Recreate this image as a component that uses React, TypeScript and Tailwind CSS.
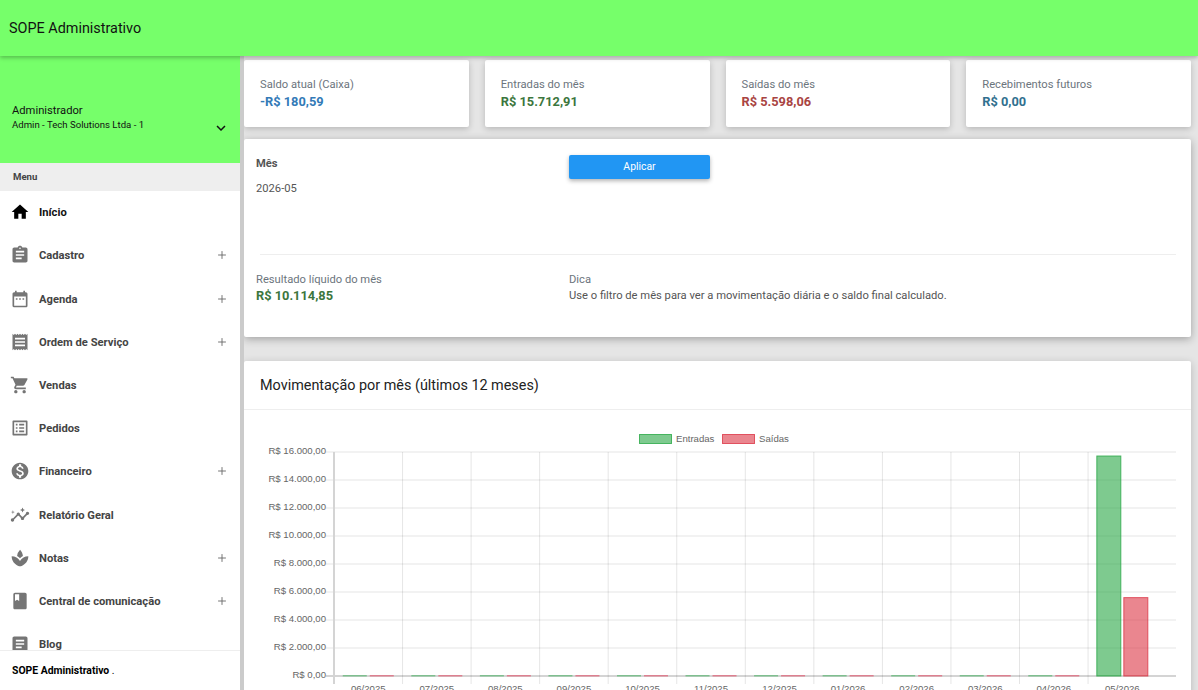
import { Plus } from 'lucide-react';
import {
  MdArticle, MdAssignment, MdBook, MdDateRange, MdExpandMore, MdHome, MdInsights,
  MdListAlt, MdMonetizationOn, MdReceipt, MdShoppingCart, MdSpa,
} from 'react-icons/md';
import type { IconType } from 'react-icons';

const menu: { label: string; icon: IconType; plus?: boolean; active?: boolean }[] = [
  { label: 'Início', icon: MdHome, active: true },
  { label: 'Cadastro', icon: MdAssignment, plus: true },
  { label: 'Agenda', icon: MdDateRange, plus: true },
  { label: 'Ordem de Serviço', icon: MdReceipt, plus: true },
  { label: 'Vendas', icon: MdShoppingCart },
  { label: 'Pedidos', icon: MdListAlt },
  { label: 'Financeiro', icon: MdMonetizationOn, plus: true },
  { label: 'Relatório Geral', icon: MdInsights },
  { label: 'Notas', icon: MdSpa, plus: true },
  { label: 'Central de comunicação', icon: MdBook, plus: true },
  { label: 'Blog', icon: MdArticle },
];

const stats = [
  { label: 'Saldo atual (Caixa)', value: '-R$ 180,59', color: 'text-[#337ab7]' },
  { label: 'Entradas do mês', value: 'R$ 15.712,91', color: 'text-[#3c763d]' },
  { label: 'Saídas do mês', value: 'R$ 5.598,06', color: 'text-[#a94442]' },
  { label: 'Recebimentos futuros', value: 'R$ 0,00', color: 'text-[#31708f]' },
];

const months = ['06/2025', '07/2025', '08/2025', '09/2025', '10/2025', '11/2025', '12/2025', '01/2026', '02/2026', '03/2026', '04/2026', '05/2026'];
const yLabels = ['R$ 16.000,00', 'R$ 14.000,00', 'R$ 12.000,00', 'R$ 10.000,00', 'R$ 8.000,00', 'R$ 6.000,00', 'R$ 4.000,00', 'R$ 2.000,00', 'R$ 0,00'];

const green = 'rgba(40,167,69,.6)';
const greenLine = 'rgba(40,167,69,.8)';
const red = 'rgba(220,53,69,.6)';
const redLine = 'rgba(220,53,69,.8)';

// chart drawn in its own coordinates: page x minus 244, page y minus 410
function Chart() {
  const left = 90;
  const right = 932;
  const top = 42;
  const zero = 266;
  const step = 68.55;
  const yOf = (v: number) => zero - (v / 16000) * (zero - top);
  const font = '"Liberation Sans", Arial, sans-serif';
  return (
    <svg width="947" height="280" className="block">
      <rect x="395.5" y="24.5" width="32" height="9" fill={green} stroke={greenLine} />
      <text x="432" y="32" fontSize="9.6" fill="#666" fontFamily={font}>Entradas</text>
      <rect x="478.5" y="24.5" width="32" height="9" fill={red} stroke={redLine} />
      <text x="515" y="32" fontSize="9.6" fill="#666" fontFamily={font}>Saídas</text>
      {yLabels.map((label, i) => {
        const y = top + (i * (zero - top)) / 8;
        return (
          <g key={label}>
            <line x1={left - 8} x2={right} y1={y} y2={y} stroke={i === 8 ? '#d4d4d4' : 'rgba(0,0,0,.1)'} strokeWidth={i === 8 ? 2 : 1} />
            <text x={82} y={y + 2} fontSize="9.6" fill="#666" textAnchor="end" fontFamily={font}>{label}</text>
          </g>
        );
      })}
      {months.map((m, i) => {
        const x = left + step * i;
        const center = x + step / 2;
        const barW = 24;
        const last = i === 11;
        const inY = yOf(15712.91);
        const outY = yOf(5598.06);
        return (
          <g key={m}>
            <line x1={x} x2={x} y1={top} y2={zero + 8} stroke={i === 0 ? '#d4d4d4' : 'rgba(0,0,0,.1)'} strokeWidth={i === 0 ? 2 : 1} />
            {last ? (
              <>
                <rect x={center - barW - 1.5} y={inY} width={barW} height={zero - inY} fill={green} stroke={greenLine} strokeWidth="1" />
                <rect x={center + 1.5} y={outY} width={barW} height={zero - outY} fill={red} stroke={redLine} strokeWidth="1" />
              </>
            ) : (
              <>
                <rect x={center - barW - 1.5} y={zero - 1} width={barW} height={1.5} fill="#7fbf8f" />
                <rect x={center + 1.5} y={zero - 1} width={barW} height={1.5} fill="#dd8090" />
              </>
            )}
            <text x={center} y={zero + 16} fontSize="9.6" fill="#666" textAnchor="middle" fontFamily={font}>{m}</text>
          </g>
        );
      })}
    </svg>
  );
}

function Sidebar() {
  return (
    <aside className="w-[240px] shrink-0 flex flex-col bg-white shadow-[2px_0_0_2px_#cbcbcb] relative z-10">
      <div className="h-[107px] shrink-0 bg-[#76ff6a] pl-3 pr-3 pt-[47px] relative">
        <div className="text-[11.2px] leading-[15px] text-[#111]">Administrador</div>
        <div className="text-[9.6px] leading-[13px] text-[#111]">Admin - Tech Solutions Ltda - 1</div>
        <MdExpandMore className="absolute right-[10px] top-[63px] text-[#111]" size={18} />
      </div>
      <div className="h-[28px] shrink-0 bg-[#eeeeee] pl-[13px] flex items-center text-[9.6px] font-bold text-[#444]">Menu</div>
      <nav className="flex-1 overflow-hidden pt-[1.1px]">
        {menu.map((item) => {
          const Icon = item.icon;
          return (
            <div key={item.label} className="h-[43.2px] flex items-center pl-[10px] pr-[12px]">
              <Icon size={20} className={`shrink-0 -mt-[3px] ${item.active ? 'text-black' : 'text-[#757575]'}`} />
              <span className={`ml-[9px] flex-1 text-[11.2px] font-bold ${item.active ? 'text-[#111]' : 'text-[#444]'}`}>{item.label}</span>
              {item.plus && <Plus size={12} strokeWidth={1.8} className="-mt-[3px] text-[#666]" />}
            </div>
          );
        })}
      </nav>
      <div className="h-[40px] shrink-0 border-t border-[#eeeeee] bg-white pl-3 flex items-center text-[10.4px] text-black">
        <span className="font-bold">SOPE Administrativo</span>&nbsp;.
      </div>
    </aside>
  );
}

export default function App() {
  return (
    <div className="h-[690px] w-[1198px] overflow-hidden flex flex-col bg-[#e5e5e5] font-['Roboto',sans-serif]">
      <header className="h-[56px] shrink-0 bg-[#76ff6a] flex items-center pl-[9px] pt-[1px] text-[14.4px] text-[#111] shadow-[0_2px_4px_rgba(0,0,0,.25)] relative z-20">
        SOPE Administrativo
      </header>
      <div className="flex flex-1 min-h-0">
        <Sidebar />
        <main className="flex-1 min-w-0 pl-[4px] pr-[7px] pt-[4px] overflow-hidden">
          <div className="grid grid-cols-4 gap-4">
            {stats.map((s) => (
              <div key={s.label} className="h-[67px] bg-white rounded-[2px] shadow-[0_2px_6px_rgba(0,0,0,.2)] pl-4 pt-[18px]">
                <div className="text-[11.2px] leading-[14px] text-[#6c757d]">{s.label}</div>
                <div className={`text-[12.8px] leading-[16px] mt-[2px] font-bold ${s.color}`}>{s.value}</div>
              </div>
            ))}
          </div>
          <section className="mt-3 h-[198px] bg-white rounded-[2px] shadow-[0_2px_8px_rgba(0,0,0,.3)] pl-3">
            <div className="flex pt-4">
              <div className="w-[313px]">
                <div className="text-[11.2px] leading-[16px] mt-[1px] font-bold text-[#555]">Mês</div>
                <div className="text-[11.2px] leading-[16px] mt-[9px] text-[#555]">2026-05</div>
              </div>
              <button className="w-[141px] h-[24px] rounded-[2px] bg-[#2196f3] text-white text-[10.4px] shadow-[0_2px_4px_rgba(0,0,0,.3)]">Aplicar</button>
            </div>
            <div className="ml-1 mr-[15px] mt-[57px] border-t border-[#eeeeee]" />
            <div className="flex pt-[17px]">
              <div className="w-[313px]">
                <div className="text-[11.2px] leading-[16px] text-[#6c757d]">Resultado líquido do mês</div>
                <div className="text-[12.8px] leading-[16px] font-bold text-[#3c763d]">R$ 10.114,85</div>
              </div>
              <div>
                <div className="text-[11.2px] leading-[16px] text-[#6c757d]">Dica</div>
                <div className="text-[11.2px] leading-[16px] text-[#555]">Use o filtro de mês para ver a movimentação diária e o saldo final calculado.</div>
              </div>
            </div>
          </section>
          <section className="mt-6 bg-white rounded-[2px] shadow-[0_2px_8px_rgba(0,0,0,.2)] h-[400px]">
            <div className="h-[49px] border-b border-[#eeeeee] pl-4 pt-[1px] flex items-center text-[14.4px] text-[#222]">
              Movimentação por mês (últimos 12 meses)
            </div>
            <Chart />
          </section>
        </main>
      </div>
    </div>
  );
}
